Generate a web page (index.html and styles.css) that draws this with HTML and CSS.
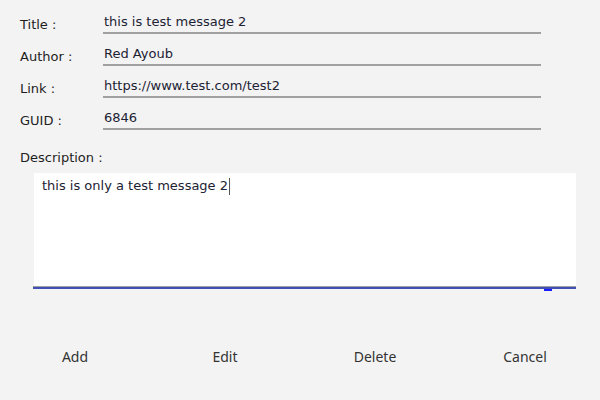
FILE: index.html
```html
<!DOCTYPE html>
<html>
<head>
<meta charset="utf-8">
<link rel="stylesheet" href="styles.css">
</head>
<body>
<div class="form">
  <div class="row">
    <div class="label">Title :</div>
    <div class="value">this is test message 2</div>
  </div>
  <div class="row">
    <div class="label">Author :</div>
    <div class="value">Red Ayoub</div>
  </div>
  <div class="row">
    <div class="label">Link :</div>
    <div class="value">https://www.test.com/test2</div>
  </div>
  <div class="row">
    <div class="label">GUID :</div>
    <div class="value">6846</div>
  </div>
  <div class="desc-label">Description :</div>
  <div class="desc">
    <div class="desc-box"><span class="desc-text">this is only a test message 2</span><span class="caret"></span></div>
    <div class="desc-line"><span class="handle"></span></div>
  </div>
</div>
<div class="buttons">
  <div class="btn">Add</div>
  <div class="btn">Edit</div>
  <div class="btn">Delete</div>
  <div class="btn">Cancel</div>
</div>
</body>
</html>
```
FILE: styles.css
```css
html, body {
  margin: 0;
  padding: 0;
  background: #f3f3f3;
  width: 600px;
  height: 400px;
  overflow: hidden;
}
body {
  font-family: "DejaVu Sans", sans-serif;
  font-size: 13px;
  color: #222;
}
.form {
  padding-top: 2px;
}
.row {
  display: grid;
  grid-template-columns: 83px 438px;
  padding-left: 20px;
  height: 32px;
}
.label {
  padding-top: 15px;
  line-height: 16px;
  color: #1e1e1e;
}
.value {
  padding: 12px 0 0 1px;
  line-height: 16px;
  height: 18px;
  border-bottom: 2px solid #a0a0a0;
  color: #1c2233;
}
.desc-label {
  margin-top: 20px;
  padding-left: 20px;
  line-height: 16px;
  color: #1e1e1e;
}
.desc {
  margin: 7px 24px 0 33px;
}
.desc-box {
  margin-left: 1px;
  height: 113px;
  background: #fff;
  box-sizing: border-box;
  padding: 5px 0 0 8px;
  line-height: 16px;
  color: #1c2233;
  display: flex;
  align-items: flex-start;
}
.caret {
  display: inline-block;
  width: 1px;
  height: 17px;
  background: #555;
  margin-left: 1px;
}
.desc-line {
  border-top: 1px solid #a0a0a0;
  height: 2px;
  background: #3f51b5;
  position: relative;
}
.handle {
  position: absolute;
  left: 511px;
  top: 2px;
  width: 8px;
  height: 2px;
  background: #1a1aff;
}
.buttons {
  display: grid;
  grid-template-columns: repeat(4, 150px);
  margin-top: 58px;
}
.btn {
  text-align: center;
  font-family: "Noto Sans", sans-serif;
  font-size: 14px;
  line-height: 19px;
  color: #333;
}
```
